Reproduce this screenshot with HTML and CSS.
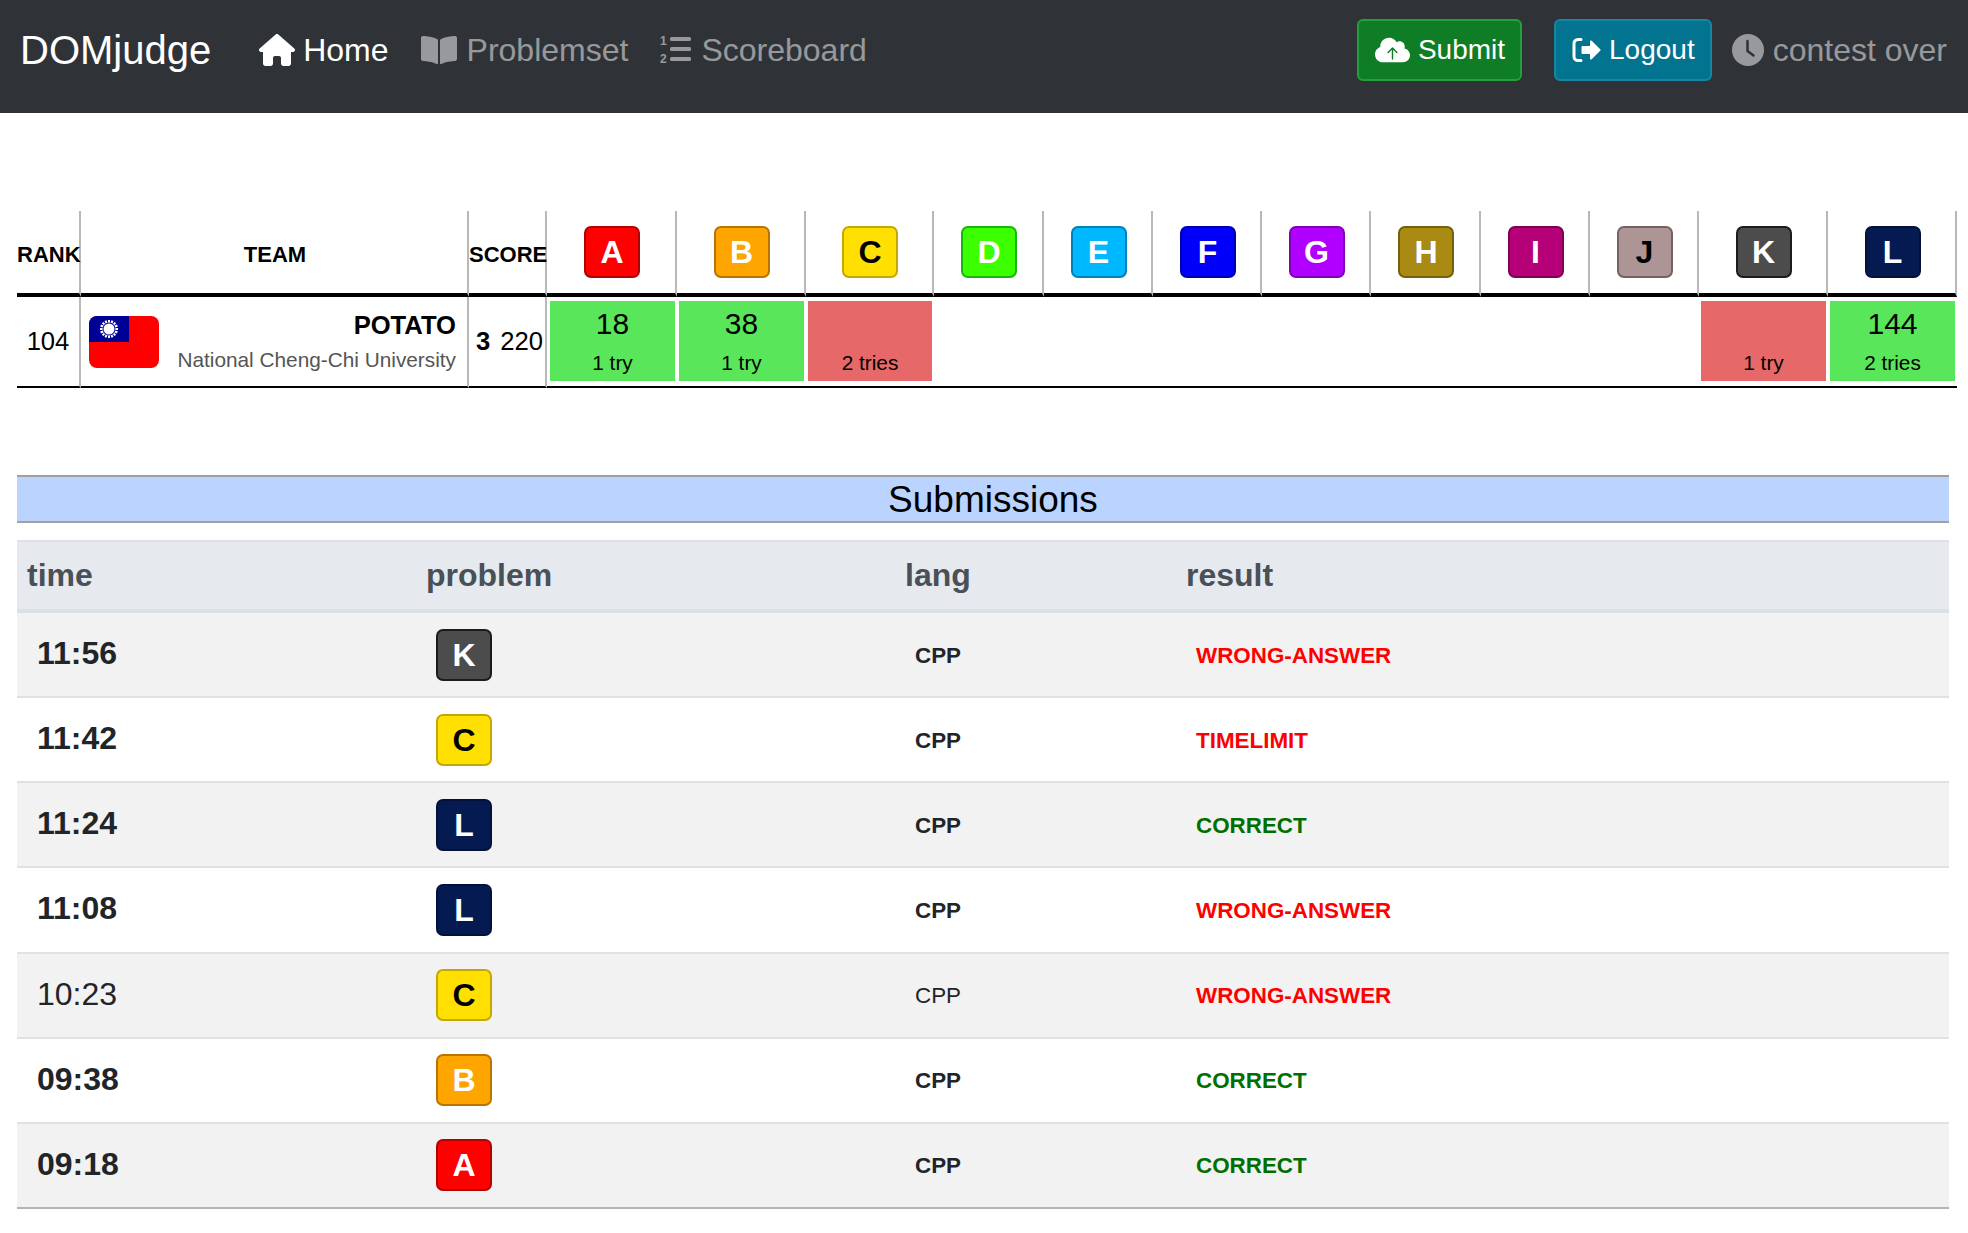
FILE: index.html
```html
<!DOCTYPE html>
<html lang="en">
<head>
<meta charset="utf-8">
<title>DOMjudge</title>
<link rel="stylesheet" href="styles.css">
</head>
<body>
<nav class="navbar">
  <a class="brand">DOMjudge</a>
  <a class="nav-link active">
    <svg class="ic ic-home" viewBox="0 0 576 512"><path fill="currentColor" d="M575.8 255.5c0 18-15 32.1-32 32.1h-32l.7 160.2c0 2.7-.2 5.4-.5 8.1V472c0 22.1-17.9 40-40 40H456c-1.1 0-2.2 0-3.3-.1c-1.4 .1-2.8 .1-4.2 .1H416 392c-22.1 0-40-17.9-40-40V448 384c0-17.7-14.3-32-32-32H256c-17.7 0-32 14.3-32 32v64 24c0 22.1-17.9 40-40 40H160 128.1c-1.5 0-3-.1-4.5-.2c-1.2 .1-2.4 .2-3.6 .2H104c-22.1 0-40-17.9-40-40V360c0-.9 0-1.9 .1-2.8V287.6H32c-18 0-32-14-32-32.1c0-9 3-17 10-24L266.4 8c7-7 15-8 22-8s15 2 21 7L564.8 231.5c8 7 12 15 11 24z"/></svg>
    <span>Home</span></a>
  <a class="nav-link">
    <svg class="ic ic-book" viewBox="0 0 576 512"><path fill="currentColor" d="M542.22 32.05c-54.8 3.11-163.72 14.43-230.96 55.59-4.64 2.84-7.27 7.89-7.27 13.17v363.87c0 11.55 12.63 18.85 23.28 13.49 69.18-34.82 169.23-44.32 218.7-46.92 16.89-.89 30.02-14.43 30.02-30.66V62.75c.01-17.71-15.35-31.74-33.77-30.7zM264.73 87.64C197.5 46.48 88.58 35.17 33.78 32.05 15.36 31.01 0 45.04 0 62.75V400.6c0 16.24 13.13 29.78 30.02 30.66 49.49 2.6 149.59 12.11 218.77 46.95 10.62 5.35 23.21-1.94 23.21-13.46V100.63c0-5.29-2.62-10.14-7.27-12.99z"/></svg>
    <span>Problemset</span></a>
  <a class="nav-link">
    <svg class="ic ic-list" viewBox="0 0 31 32"><g fill="currentColor"><rect x="10" y="3" width="21" height="4" rx="1.500"/><rect x="10" y="13" width="21" height="4" rx="1.500"/><rect x="10" y="23" width="21" height="4" rx="1.500"/><text class="ic-digit" x="0" y="11">1</text><text class="ic-digit" x="0" y="29">2</text></g></svg>
    <span>Scoreboard</span></a>
  <div class="nav-right">
    <a class="btn btn-submit">
      <svg class="ic ic-cloud" viewBox="0 0 640 512"><path fill="currentColor" d="M537.6 226.6c4.1-10.7 6.4-22.4 6.4-34.6 0-53-43-96-96-96-19.7 0-38.1 6-53.3 16.2C367 64.2 315.300 32 256 32c-88.400 0-160 71.600-160 160 0 2.700.1 5.400.2 8.100C40.200 219.800 0 273.200 0 336c0 79.500 64.500 144 144 144h368c70.700 0 128-57.300 128-128 0-61.900-44-113.600-102.400-125.400z"/><path class="arrow" d="M320 420V230M240 300l80-80 80 80"/></svg>
      <span>Submit</span></a>
    <a class="btn btn-logout">
      <svg class="ic ic-out" viewBox="0 0 29 24"><path class="bracket" d="M9 1.500H6a4 4 0 0 0-4 4v13a4 4 0 0 0 4 4h3"/><path fill="currentColor" d="M10.500 8H18V3.500a1 1 0 0 1 1.700-.7l8.500 8.400a1 1 0 0 1 0 1.500l-8.500 8.500a1 1 0 0 1-1.700-.7V16h-7.500a1 1 0 0 1-1-1V9a1 1 0 0 1 1-1z"/></svg>
      <span>Logout</span></a>
    <span class="clock">
      <svg class="ic ic-clock" viewBox="0 0 32 32"><circle cx="16" cy="16" r="16" fill="currentColor"/><path class="hands" d="M15.500 7v10l6 4.500"/></svg>
      <span>contest over</span></span>
  </div>
</nav>

<main class="page">
  <table class="scoreboard">
    <colgroup>
      <col class="c-rank"><col class="c-team"><col class="c-score">
      <col class="c-a"><col class="c-b"><col class="c-c">
      <col class="c-d"><col class="c-e"><col class="c-e"><col class="c-e">
      <col class="c-d"><col class="c-e"><col class="c-e">
      <col class="c-b"><col class="c-b">
    </colgroup>
    <thead>
      <tr>
        <th class="th-text th-left">RANK</th><th class="th-text th-team">TEAM</th><th class="th-text th-left">SCORE</th>
        <th><span class="badge p-a">A</span></th>
        <th><span class="badge p-b">B</span></th>
        <th><span class="badge p-c">C</span></th>
        <th><span class="badge p-d">D</span></th>
        <th><span class="badge p-e">E</span></th>
        <th><span class="badge p-f">F</span></th>
        <th><span class="badge p-g">G</span></th>
        <th><span class="badge p-h">H</span></th>
        <th><span class="badge p-i">I</span></th>
        <th><span class="badge p-j">J</span></th>
        <th><span class="badge p-k">K</span></th>
        <th><span class="badge p-l">L</span></th>
      </tr>
    </thead>
    <tbody>
      <tr>
        <td class="td-rank">104</td>
        <td class="td-team">
          <div class="team">
            <svg class="flag" viewBox="0 0 70 52">
              <rect width="70" height="52" rx="8" fill="#fe0000"/>
              <path d="M8 0H40V26H0V8a8 8 0 0 1 8-8z" fill="#000095"/>
              <g stroke="#fff" stroke-width="2">
                <path d="M20 4v18M11 13h18M13.600 6.600l12.800 12.800M26.400 6.600L13.600 19.400M16.500 4.600l7 16.800M23.500 4.600l-7 16.800M11.600 9.500l16.800 7M28.400 9.500l-16.800 7"/>
              </g>
              <circle cx="20" cy="13" r="6.500" fill="#000095"/>
              <circle cx="20" cy="13" r="5.500" fill="#fff"/>
            </svg>
            <div class="team-text">
              <div class="team-name">POTATO</div>
              <div class="team-aff">National Cheng-Chi University</div>
            </div>
          </div>
        </td>
        <td class="td-score"><b>3</b><span>220</span></td>
        <td class="td-cell td-first"><div class="cell ok"><div class="num">18</div><div class="tries">1 try</div></div></td>
        <td class="td-cell"><div class="cell ok"><div class="num">38</div><div class="tries">1 try</div></div></td>
        <td class="td-cell"><div class="cell bad"><div class="num">&nbsp;</div><div class="tries">2 tries</div></div></td>
        <td class="td-cell"></td><td class="td-cell"></td><td class="td-cell"></td><td class="td-cell"></td>
        <td class="td-cell"></td><td class="td-cell"></td><td class="td-cell"></td>
        <td class="td-cell"><div class="cell bad"><div class="num">&nbsp;</div><div class="tries">1 try</div></div></td>
        <td class="td-cell"><div class="cell ok"><div class="num">144</div><div class="tries">2 tries</div></div></td>
      </tr>
    </tbody>
  </table>

  <h2 class="section-title">Submissions</h2>

  <table class="subs">
    <colgroup><col class="s-time"><col class="s-prob"><col class="s-lang"><col class="s-res"></colgroup>
    <thead>
      <tr><th>time</th><th>problem</th><th>lang</th><th>result</th></tr>
    </thead>
    <tbody>
      <tr class="unread"><td class="t">11:56</td><td><span class="badge p-k">K</span></td><td class="lang">CPP</td><td class="res wrong">WRONG-ANSWER</td></tr>
      <tr class="unread"><td class="t">11:42</td><td><span class="badge p-c">C</span></td><td class="lang">CPP</td><td class="res wrong">TIMELIMIT</td></tr>
      <tr class="unread"><td class="t">11:24</td><td><span class="badge p-l">L</span></td><td class="lang">CPP</td><td class="res right">CORRECT</td></tr>
      <tr class="unread"><td class="t">11:08</td><td><span class="badge p-l">L</span></td><td class="lang">CPP</td><td class="res wrong">WRONG-ANSWER</td></tr>
      <tr><td class="t">10:23</td><td><span class="badge p-c">C</span></td><td class="lang">CPP</td><td class="res wrong">WRONG-ANSWER</td></tr>
      <tr class="unread"><td class="t">09:38</td><td><span class="badge p-b">B</span></td><td class="lang">CPP</td><td class="res right">CORRECT</td></tr>
      <tr class="unread"><td class="t">09:18</td><td><span class="badge p-a">A</span></td><td class="lang">CPP</td><td class="res right">CORRECT</td></tr>
    </tbody>
  </table>
</main>
</body>
</html>
```
FILE: styles.css
```css
* { box-sizing: border-box; }
html, body { margin: 0; padding: 0; }
body {
  font-family: "Liberation Sans", Arial, sans-serif;
  color: #000;
  background: #fff;
  overflow: hidden;
}

/* navbar */
.navbar {
  height: 113px;
  background: #2f3338;
  display: flex;
  align-items: flex-start;
  padding: 19px 21px 0 20px;
  font-size: 32px;
}
.brand {
  font-size: 40px;
  line-height: 62px;
  color: #fff;
  margin-right: 32px;
}
.nav-link {
  display: flex;
  align-items: center;
  height: 62px;
  padding: 0 16px;
  color: rgba(255, 255, 255, .5);
  white-space: nowrap;
}
.nav-link.active { color: #fff; }
.ic { display: block; flex: none; }
.ic-home { width: 36px; height: 32px; margin-right: 8px; }
.ic-book { width: 36px; height: 32px; margin-right: 10px; }
.ic-list { width: 31px; height: 32px; margin-right: 10px; }
.ic-digit { font: bold 12px "Liberation Sans", Arial, sans-serif; }
.nav-right {
  margin-left: auto;
  display: flex;
  align-items: center;
  height: 62px;
}
.btn {
  display: flex;
  align-items: center;
  height: 62px;
  padding: 0 15px 0 16px;
  border: 2px solid;
  border-radius: 6px;
  color: #fff;
  font-size: 28px;
}
.btn-submit { background: #0f7c26; border-color: #22a03a; margin-right: 32px; }
.btn-logout { background: #03748f; border-color: #1587a5; margin-right: 20px; }
.ic-cloud { width: 35px; height: 28px; margin-right: 8px; }
.arrow { fill: none; stroke: #0f7c26; stroke-width: 26; stroke-linecap: round; stroke-linejoin: round; }
.ic-out { width: 29px; height: 24px; margin-right: 8px; }
.bracket { fill: none; stroke: currentColor; stroke-width: 3; stroke-linecap: round; }
.clock {
  display: flex;
  align-items: center;
  color: rgba(255, 255, 255, .5);
}
.ic-clock { width: 32px; height: 32px; margin-right: 9px; }
.hands { fill: none; stroke: #2f3338; stroke-width: 2.500; stroke-linecap: round; stroke-linejoin: round; }

/* page */
.page { padding: 98px 0 0 17px; }

/* problem badge */
.badge {
  display: inline-flex;
  align-items: center;
  justify-content: center;
  width: 56px;
  height: 52px;
  border: 2px solid;
  border-radius: 7px;
  font-size: 32px;
  font-weight: bold;
  line-height: 1;
  color: #fff;
  vertical-align: middle;
}
.p-a { background: #f00; border-color: #b30000; }
.p-b { background: #ffa500; border-color: #b97400; }
.p-c { background: #ffe000; border-color: #c4a800; color: #000; }
.p-d { background: #3cff00; border-color: #12b80c; }
.p-e { background: #00b8ff; border-color: #0080b8; }
.p-f { background: #0000fa; border-color: #0000b3; }
.p-g { background: #b000ff; border-color: #8000b3; }
.p-h { background: #a98a13; border-color: #76600d; }
.p-i { background: #b60077; border-color: #7f0053; }
.p-j { background: #ad9595; border-color: #796060; color: #000; }
.p-k { background: #4c4c4c; border-color: #1c1c1c; }
.p-l { background: #061a52; border-color: #04123a; }

/* scoreboard */
.scoreboard {
  width: 1940px;
  table-layout: fixed;
  border-collapse: separate;
  border-spacing: 0;
}
.c-rank { width: 64px; }
.c-team { width: 388px; }
.c-score { width: 78px; }
.c-a { width: 130px; }
.c-b { width: 129px; }
.c-c { width: 128px; }
.c-d { width: 110px; }
.c-e { width: 109px; }
.scoreboard th {
  height: 86px;
  padding: 0 0 0 2px;
  font-size: 22px;
  font-weight: bold;
  white-space: nowrap;
  text-align: center;
  border-right: 2px solid #b8b8b8;
  border-bottom: 4px solid #000;
  overflow: visible;
}
.scoreboard th.th-text { padding-top: 6px; }
.scoreboard th.th-left { text-align: left; padding-left: 0; }
.scoreboard td {
  height: 91px;
  padding: 0;
  border-bottom: 2px solid #000;
  vertical-align: top;
}
.td-rank, .td-team, .td-score { border-right: 2px solid #b8b8b8; }
.td-rank {
  font-size: 25.600px;
  text-align: center;
  line-height: 89px;
}
.team {
  display: flex;
  align-items: center;
  justify-content: space-between;
  height: 89px;
  padding: 0 11px 0 8px;
}
.flag { width: 70px; height: 52px; display: block; flex: none; }
.team-text { text-align: right; padding-top: 1px; }
.team-name { font-size: 25.600px; font-weight: bold; line-height: 30px; }
.team-aff { font-size: 20.800px; color: #555; line-height: 30px; margin-top: 5px; }
.td-score {
  font-size: 25.600px;
  line-height: 89px;
  white-space: nowrap;
  padding-left: 7px !important;
}
.td-score span { margin-left: 10px; }
.td-cell { padding: 4px 2px 5px 2px !important; }
.td-cell.td-first { padding-left: 3px !important; }
.cell {
  height: 80px;
  text-align: center;
}
.ok { background: #5ae65a; }
.bad { background: #e66868; }
.num { font-size: 30px; line-height: 34px; padding-top: 6px; }
.tries { font-size: 20.800px; line-height: 24px; margin-top: 10px; }

/* submissions */
.section-title {
  width: 1932px;
  height: 48px;
  margin: 87px 0 17px;
  padding: 1px 0 0 20px;
  background: #bbd3ff;
  border-top: 2px solid #a0a0a0;
  border-bottom: 2px solid #a0a0a0;
  font-size: 37px;
  font-weight: normal;
  line-height: 44px;
  text-align: center;
}
.subs {
  width: 1932px;
  table-layout: fixed;
  border-collapse: separate;
  border-spacing: 0;
  color: #212529;
}
.s-time { width: 399px; }
.s-prob { width: 479px; }
.s-lang { width: 281px; }
.subs th {
  height: 73px;
  padding: 0 10px;
  background: #e6e9ed;
  color: #495057;
  font-size: 32px;
  font-weight: bold;
  text-align: left;
  border-top: 2px solid #dee2e6;
  border-bottom: 4px solid #dbe0e4;
}
.subs td {
  height: 85.140px;
  padding: 0 0 0 20px;
  border-bottom: 2px solid #dee2e6;
  font-size: 32px;
  vertical-align: middle;
}
.subs tbody tr:nth-child(odd) td { background: #f2f2f2; }
.subs tbody tr:last-child td { border-bottom-color: #b5b5b5; }
.subs td.t { padding-bottom: 2px; }
.subs td.lang { font-size: 22.400px; padding-top: 2px; }
.subs td.res { font-size: 22.400px; font-weight: bold; padding-top: 2px; }
.unread .t, .unread .lang { font-weight: bold; }
.wrong { color: #f00; }
.right { color: #006f00; }
```
